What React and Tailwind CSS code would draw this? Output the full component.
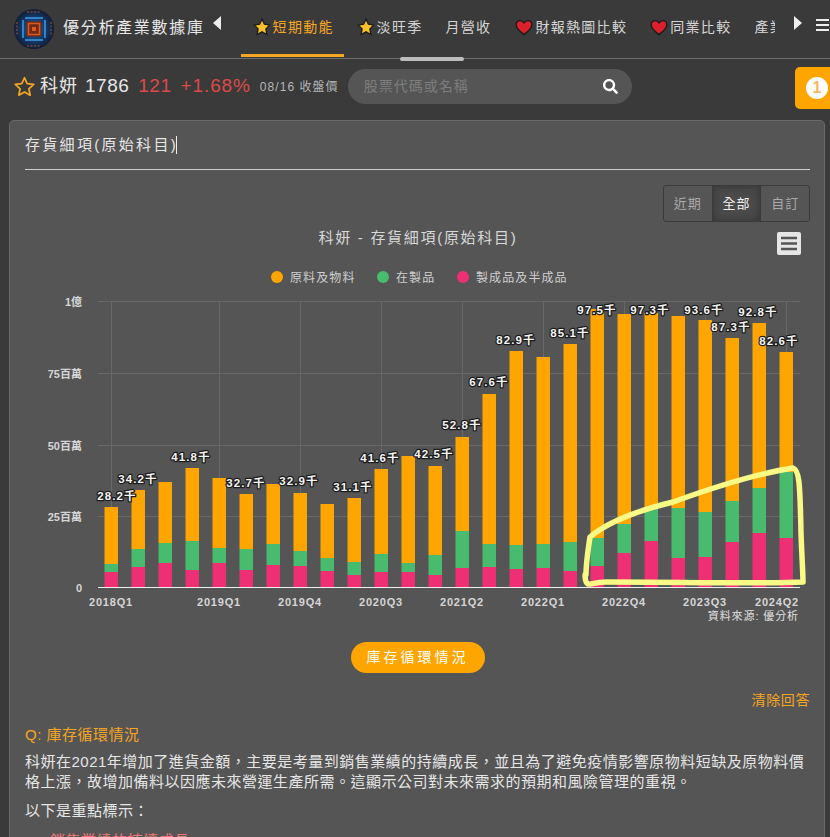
import React from "react";
import { FaSearch } from "react-icons/fa";

// [orange top, green top, pink top], page y of each segment
const bars = [
  [507, 564, 572], [490, 549, 567], [482, 543, 563], [468, 541, 570], [478, 548, 563],
  [494, 549, 570], [484, 544, 565], [493, 551, 566], [504, 558, 571], [498, 562, 575],
  [469, 554, 572], [456, 563, 572], [466, 555, 575], [437, 531, 568], [394, 544, 567],
  [351, 545, 569], [357, 544, 568], [344, 542, 571], [309, 538, 566], [314, 524, 553],
  [313, 507, 541], [316, 508, 558], [320, 512, 557], [338, 501, 542], [323, 488, 533],
  [352, 472, 538],
];

const labels = [
  ["28.2千", 117, 496], ["34.2千", 138, 479], ["41.8千", 191, 457], ["32.7千", 246, 483],
  ["32.9千", 299, 481], ["31.1千", 353, 487], ["41.6千", 380, 458], ["42.5千", 434, 454],
  ["52.8千", 462, 425], ["67.6千", 489, 382], ["82.9千", 516, 340], ["85.1千", 570, 333],
  ["97.5千", 597, 310], ["97.3千", 650, 310], ["93.6千", 704, 310], ["87.3千", 731, 327],
  ["92.8千", 758, 312], ["82.6千", 779, 341],
];

const xTicks = [
  ["2018Q1", 111, 111], ["2019Q1", 219, 219], ["2019Q4", 300, 300], ["2020Q3", 381, 381],
  ["2021Q2", 462, 462], ["2022Q1", 543, 543], ["2022Q4", 624, 624], ["2023Q3", 705, 705],
  ["2024Q2", 786, 777],
];

const yTicks = [["1億", 301], ["75百萬", 373], ["50百萬", 445], ["25百萬", 516]];

const legend = [
  ["#ffa500", 277, "原料及物料"],
  ["#48bb6e", 383, "在製品"],
  ["#ef2f73", 463, "製成品及半成品"],
];

function Star() {
  return (
    <svg width="18" height="18" viewBox="0 0 24 24" className="shrink-0">
      <path
        d="M12 1.500l3.200 6.800 7.300 1-5.300 5.200 1.300 7.500-6.500-3.600-6.500 3.600 1.300-7.500L1.500 9.300l7.300-1z"
        fill="#fbc02d"
        stroke="#1d1d1d"
        strokeWidth="1.800"
      />
    </svg>
  );
}

function Heart() {
  return (
    <svg width="18" height="17" viewBox="0 0 24 22" className="shrink-0">
      <path
        d="M12 20.500C5 15 1.500 11.600 1.500 7.200 1.500 4 4 1.800 6.800 1.800c2.100 0 4 1.100 5.200 3 1.200-1.900 3.100-3 5.200-3 2.800 0 5.300 2.200 5.300 5.400 0 4.400-3.500 7.800-10.500 13.300z"
        fill="#d9202c"
        stroke="#1a1a1a"
        strokeWidth="1.800"
      />
    </svg>
  );
}

function Logo() {
  return (
    <svg width="40" height="40" viewBox="0 0 40 40" className="shrink-0">
      <defs>
        <radialGradient id="logoGlow">
          <stop offset="0" stopColor="#1c5fa8" />
          <stop offset="0.75" stopColor="#123057" />
          <stop offset="1" stopColor="#141c33" />
        </radialGradient>
      </defs>
      <circle cx="20" cy="20" r="20" fill="url(#logoGlow)" />
      <rect x="12.500" y="12.500" width="15" height="15" fill="#6e2a14" />
      <rect x="14.500" y="14.500" width="11" height="11" fill="none" stroke="#e0581f" strokeWidth="1.500" />
      <rect x="18" y="18" width="4" height="4" fill="#e0581f" />
      <path d="M9 11v18M31 11v18M11 9h18M11 31h18" stroke="#3f9be8" strokeWidth="1.500" />
      <path d="M3 13v14M37 13v14M13 3h14M13 37h14" stroke="#a85a2c" strokeWidth="1" strokeDasharray="2 1.500" />
    </svg>
  );
}

function Chart() {
  return (
    <svg
      viewBox="25 226 785 410"
      width="785"
      height="410"
      className="block"
      style={{ fontFamily: '"Liberation Sans","Noto Sans CJK TC",sans-serif' }}
    >
      <text x="418" y="243" textAnchor="middle" fontSize="15" letterSpacing="1.700" fill="#d8d8d8">
        科妍 - 存貨細項(原始科目)
      </text>

      <rect x="777" y="232" width="24" height="23" rx="2" fill="#e6e6e6" />
      <path d="M781 238h16M781 243.500h16M781 249h16" stroke="#555" strokeWidth="2.500" />

      {legend.map(([color, x, name]) => (
        <g key={name}>
          <circle cx={x} cy="277" r="6" fill={color} />
          <text x={x + 13} y="282" fontSize="12" letterSpacing="1.100" fill="#cfcfcf">
            {name}
          </text>
        </g>
      ))}

      {yTicks.map(([name, y]) => (
        <g key={name}>
          <line x1="98" x2="800" y1={y + 0.5} y2={y + 0.5} stroke="#686868" />
          <text x="82" y={y + 5} textAnchor="end" fontSize="11" fontWeight="700" fill="#d6d6d6">
            {name}
          </text>
        </g>
      ))}
      {xTicks.map(([name, x]) => (
        <line key={name} x1={x + 0.5} x2={x + 0.5} y1="301" y2="587" stroke="#686868" />
      ))}

      {bars.map(([orange, green, pink], i) => {
        const x = 104.500 + i * 27;
        return (
          <g key={i}>
            <rect x={x} y={orange} width="13.500" height={green - orange} fill="#ffa500" />
            <rect x={x} y={green} width="13.500" height={pink - green} fill="#48bb6e" />
            <rect x={x} y={pink} width="13.500" height={587 - pink} fill="#ef2f73" />
          </g>
        );
      })}

      <line x1="98" x2="800" y1="587.500" y2="587.500" stroke="#f0f0f0" />
      <text x="82" y="592" textAnchor="end" fontSize="11" fontWeight="700" fill="#d6d6d6">
        0
      </text>

      {xTicks.map(([name, , labelX]) => (
        <text
          key={name}
          x={labelX}
          y="606"
          textAnchor="middle"
          fontSize="11"
          fontWeight="700"
          letterSpacing="0.800"
          fill="#d6d6d6"
        >
          {name}
        </text>
      ))}

      {labels.map(([text, x, y]) => (
        <text
          key={text}
          x={x}
          y={y + 4}
          textAnchor="middle"
          fontSize="11.500"
          fontWeight="700"
          letterSpacing="1.100"
          fill="#f4f4f4"
          stroke="#1c1c1c"
          strokeWidth="2.500"
          strokeLinejoin="round"
          className="[paint-order:stroke]"
        >
          {text}
        </text>
      ))}

      <text x="799" y="620" textAnchor="end" fontSize="11" letterSpacing="0.900" fill="#e0e0e0">
        資料來源: 優分析
      </text>

      {/* hand drawn highlight */}
      <path
        d="M590 537C610 520 640 510 673 502C720 485 760 473 793 468C799 470 800 480 801 533C802 560 803 575 803 582C760 584 680 582 606 582C595 582 590 585 588 584C584 582 585 570 586 575C586 565 588 550 590 537Z"
        fill="none"
        stroke="#f9f986"
        strokeWidth="5.500"
        strokeLinejoin="round"
      />
    </svg>
  );
}

export default function App() {
  return (
    <div className="relative h-[837px] w-[830px] overflow-hidden bg-[#3a3a3a] font-['Liberation_Sans','Noto_Sans_CJK_TC',sans-serif] text-[#e0e0e0]">
      {/* Top nav */}
      <header className="relative flex h-[59px] items-center border-b border-[#6a6a6a]">
        <div className="ml-[14px] flex items-center">
          <Logo />
          <span className="ml-[9px] mb-[2px] text-[16px] tracking-[1.700px] text-[#e8e8e8]">優分析產業數據庫</span>
          <span className="ml-[8px] mb-[12px] h-0 w-0 border-y-[7px] border-r-[8px] border-y-transparent border-r-[#eee]" />
        </div>

        <nav className="ml-[20px] flex h-[58px] w-[534px] items-center overflow-hidden whitespace-nowrap text-[14px] tracking-[1.300px] text-[#d5d5d5]">
          <a className="mb-px flex h-[57px] w-[103px] shrink-0 items-center gap-[2px] border-b-[3px] border-[#f5a623] pl-[12px] text-[#f5a623]">
            <Star />
            短期動能
          </a>
          <a className="mb-[4px] ml-[13px] flex shrink-0 items-center gap-[2px]">
            <Star />
            淡旺季
          </a>
          <a className="mb-[4px] ml-[23px] shrink-0">月營收</a>
          <a className="mb-[4px] ml-[24px] flex shrink-0 items-center gap-[2px]">
            <Heart />
            財報熱圖比較
          </a>
          <a className="mb-[4px] ml-[23px] flex shrink-0 items-center gap-[2px]">
            <Heart />
            同業比較
          </a>
          <a className="mb-[4px] ml-[23px] shrink-0">產業</a>
        </nav>

        <span className="ml-[19px] mb-[12px] h-0 w-0 border-y-[7px] border-l-[8px] border-y-transparent border-l-[#eee]" />
        <div className="mb-[8px] ml-[14px] flex w-[13px] flex-col gap-[3px] overflow-hidden">
          <span className="h-[2px] w-[20px] bg-[#eee]" />
          <span className="h-[2px] w-[20px] bg-[#eee]" />
          <span className="h-[2px] w-[20px] bg-[#eee]" />
        </div>

        <span className="absolute left-[400px] top-[57px] h-[4px] w-[64px] rounded-full bg-[#bdbdbd]" />
      </header>

      {/* Stock row */}
      <div className="mb-[6px] flex h-[55px] items-center pl-[14px]">
        <svg width="21" height="21" viewBox="0 0 24 24" fill="none" className="shrink-0">
          <path
            d="M12 2l3.100 6.700 7.400.9-5.500 5 1.500 7.300L12 18.300l-6.500 3.600L7 14.600l-5.500-5 7.400-.9z"
            stroke="#f5a623"
            strokeWidth="2"
            strokeLinejoin="round"
          />
        </svg>
        <span className="ml-[5px] text-[18px] tracking-[1px] text-[#e6e6e6]">科妍</span>
        <span className="ml-[7px] text-[19px] tracking-[0.500px] text-[#e6e6e6]">1786</span>
        <span className="ml-[9px] text-[19px] tracking-[0.500px] text-[#dd4a4a]">121</span>
        <span className="ml-[9px] text-[19px] tracking-[0.900px] text-[#dd4a4a]">+1.68%</span>
        <span className="ml-[9px] text-[12px] tracking-[1.050px] text-[#b5b5b5]">08/16 收盤價</span>
        <div className="ml-[9px] flex h-[35px] w-[284px] items-center justify-between rounded-full bg-[#555] pl-[16px] pr-[14px]">
          <span className="text-[14px] tracking-[1px] text-[#7d7d7d]">股票代碼或名稱</span>
          <FaSearch size={15} className="text-white" />
        </div>
      </div>

      <div className="absolute left-[795px] top-[67px] flex h-[42px] w-[35px] items-center rounded-l-[5px] bg-[#ffa500] pl-[11px]">
        <span className="flex h-[22px] w-[22px] shrink-0 items-center justify-center rounded-full bg-white text-[16px] font-bold text-[#f8b860]">
          1
        </span>
      </div>

      {/* Card */}
      <section className="ml-[9px] h-[800px] w-[816px] rounded-t-[5px] border border-[#6a6a6a] bg-[#555] pl-[15px] pr-[14px]">
        <div className="flex h-[49px] items-center border-b border-[#cfcfcf] text-[15px] tracking-[2.300px] text-[#e6e6e6]">
          存貨細項(原始科目)
          <span className="ml-[-2px] h-[18px] w-px bg-[#eee]" />
        </div>

        <div className="mt-[15px] flex justify-end">
          <div className="flex h-[37px] w-[147px] rounded-[3px] border border-[#3a3a3a] text-[13px] tracking-[1px]">
            <span className="flex flex-1 items-center justify-center text-[#aaa]">近期</span>
            <span className="flex flex-1 items-center justify-center border-x border-[#3a3a3a] bg-[#4a4a4a] text-[#f2f2f2] shadow-[inset_0_0_8px_rgba(0,0,0,0.3)]">全部</span>
            <span className="flex flex-1 items-center justify-center text-[#aaa]">自訂</span>
          </div>
        </div>

        <div className="mt-[4px]">
          <Chart />
        </div>

        <div className="mt-[6px] flex justify-center">
          <button className="h-[31px] w-[134px] rounded-full bg-[#ffa500] text-[14px] tracking-[3px] text-white">
            庫存循環情況
          </button>
        </div>

        <div className="mt-[17px] text-right text-[14px] tracking-[0.600px] text-[#f5a623]">清除回答</div>

        <div className="mt-[13px] text-[15px] tracking-[0.500px] text-[#f5a623]">Q: 庫存循環情況</div>
        <p className="mt-[5px] text-[15px] leading-[20px] tracking-[0.500px] text-[#e6e6e6]">
          科妍在2021年增加了進貨金額，主要是考量到銷售業績的持續成長，並且為了避免疫情影響原物料短缺及原物料價格上漲，故增加備料以因應未來營運生產所需。這顯示公司對未來需求的預期和風險管理的重視。
        </p>
        <p className="mt-[9px] text-[15px] leading-[20px] tracking-[0.500px] text-[#e6e6e6]">以下是重點標示：</p>
        <p className="ml-[25px] mt-[10px] text-[15px] leading-[20px] tracking-[0.500px] text-[#f27878]">銷售業績的持續成長</p>
      </section>
    </div>
  );
}
